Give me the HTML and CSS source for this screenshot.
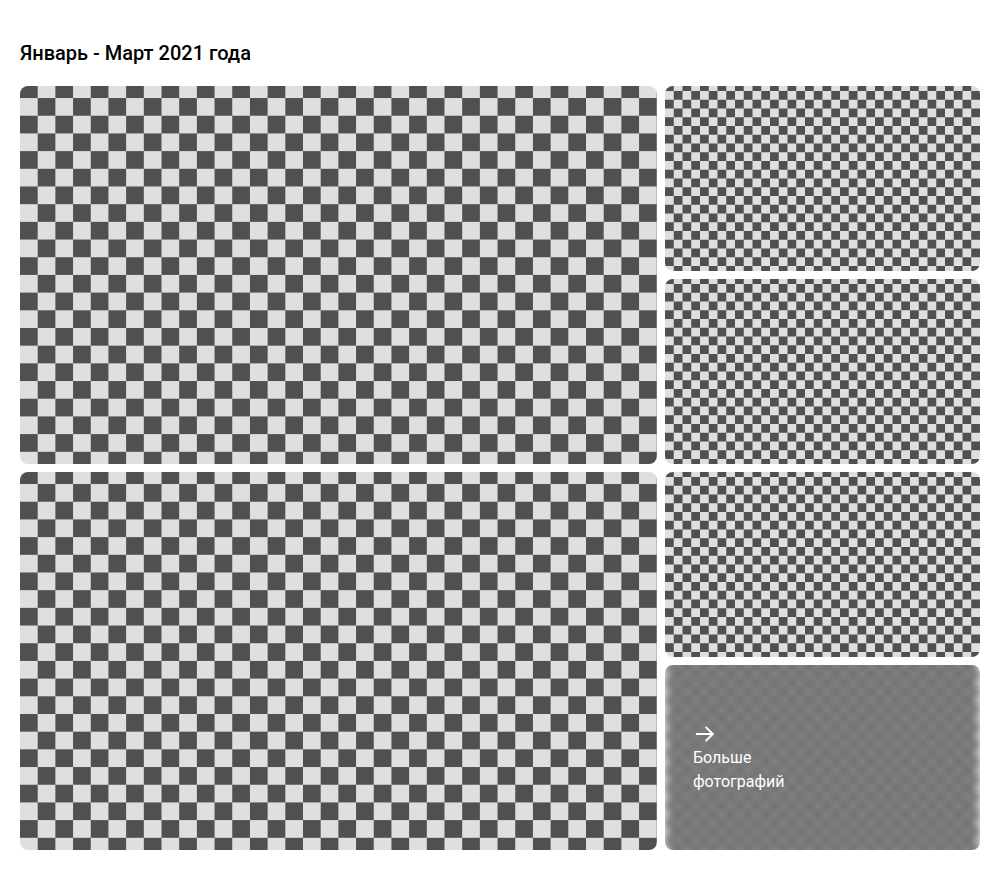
FILE: index.html
```html
<!DOCTYPE html>
<html lang="ru">

<head>
    <meta charset="UTF-8">
    <title>Январь - Март 2021 года</title>
    <link rel="stylesheet" href="styles.css">
</head>

<body>
    <h1 class="title">Январь - Март 2021 года</h1>

    <div class="gallery">
        <div class="photo photo-big"></div>
        <div class="photo"></div>
        <div class="photo"></div>
        <div class="photo photo-big"></div>
        <div class="photo"></div>
        <div class="more">
            <div class="more-bg"></div>
            <div class="more-content">
                <svg class="more-arrow" width="18" height="16" viewBox="0 0 18 16" fill="none">
                    <path d="M0 8H16.6M9.6 0.8L16.8 8L9.6 15.2" stroke="#fff" stroke-width="1.9" />
                </svg>
                <span class="more-text">Больше<br>фотографий</span>
            </div>
        </div>
    </div>
</body>

</html>
```

FILE: styles.css
```css
body {
    margin: 0;
    padding: 0 20px;
    background-color: #fff;
    color: #000;
    font-family: Roboto, sans-serif;
}

.title {
    margin: 0;
    padding-top: 39px;
    height: 47px;
    font-size: 20px;
    line-height: 28px;
    font-weight: 500;
}

.gallery {
    display: grid;
    grid-template-columns: 637px 315px;
    grid-template-rows: repeat(4, 185px);
    gap: 8px;
}

.photo {
    border-radius: 8px;
    background: repeating-conic-gradient(#dfdfdf 0 25%, #505050 0 50%) 0 -3.75px / 17.5px 17.5px;
    filter: blur(0.35px);
}

.photo-big {
    grid-row: span 2;
    background-size: 35.39px 35.39px;
    background-position: 0 -5.65px;
}

.more {
    position: relative;
    overflow: hidden;
    border-radius: 8px;
    display: flex;
    align-items: flex-end;
}

.more-bg {
    position: absolute;
    inset: -8px 0;
    background: repeating-conic-gradient(#dfdfdf 0 25%, #505050 0 50%) 0 4.25px / 17.5px 17.5px;
    filter: blur(5px) brightness(0.8);
}

.more-content {
    position: relative;
    display: flex;
    flex-direction: column;
    align-items: flex-start;
    padding: 0 28px 56px;
    color: #fff;
}

.more-arrow {
    margin: 0 0 4px 3px;
}

.more-text {
    font-size: 16px;
    line-height: 24px;
}
```
